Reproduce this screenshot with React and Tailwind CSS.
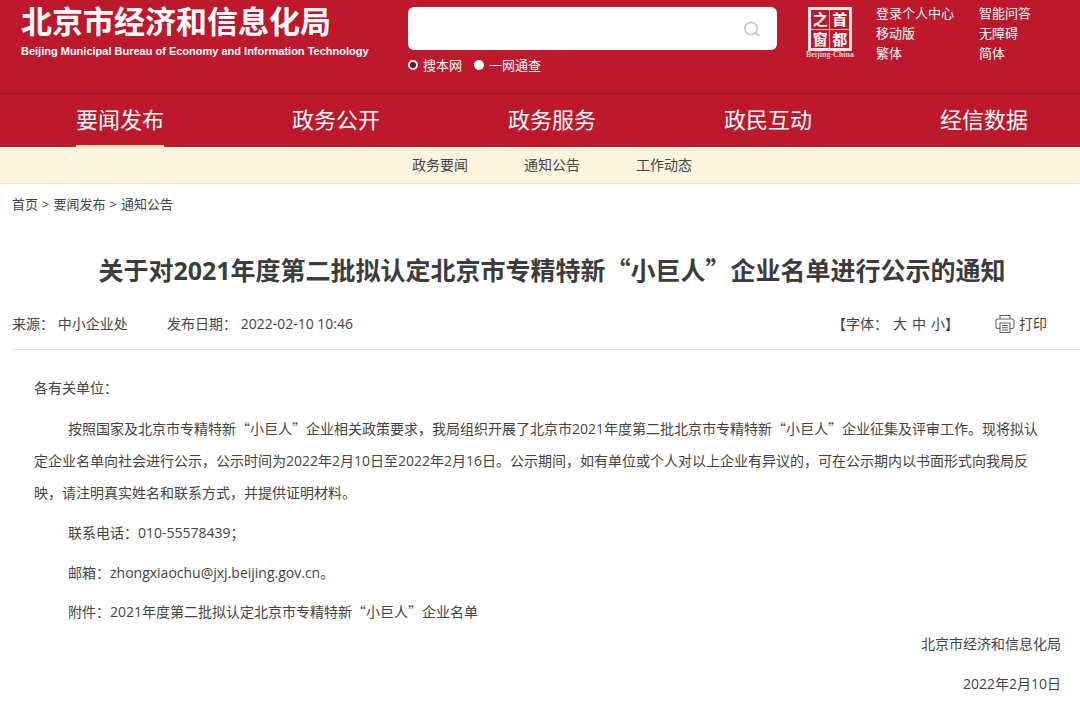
import { useState } from "react";

const navItems = ["要闻发布", "政务公开", "政务服务", "政民互动", "经信数据"];
const subItems = ["政务要闻", "通知公告", "工作动态"];
const crumbs = ["首页", "要闻发布", "通知公告"];
const userLinks = ["登录个人中心", "移动版", "繁体"];
const helpLinks = ["智能问答", "无障碍", "简体"];
const scopes = [
    { id: "site", label: "搜本网" },
    { id: "all", label: "一网通查" },
];

// full-width curly quotes have to come from the CJK font
const Quoted = ({ children }) => (
    <>
        <span className="font-['Noto_Sans_CJK_SC',sans-serif]">“</span>
        {children}
        <span className="font-['Noto_Sans_CJK_SC',sans-serif]">”</span>
    </>
);

const Seal = () => (
    <a href="#" className="flex flex-col items-center w-[50px]">
        <span className="grid grid-cols-2 gap-px w-11 h-11 border-3 border-[#fbe9ea] bg-[#f0b9bf]">
            {["之", "首", "窗", "都"].map((char) => (
                <span
                    key={char}
                    className="flex items-center justify-center overflow-hidden bg-[#bd182b] text-[15px] leading-4 font-bold"
                >
                    {char}
                </span>
            ))}
        </span>
        <span className="font-['Liberation_Serif',serif] text-[8px] leading-2 font-bold text-[#f6cdd1] whitespace-nowrap">
            Beijing-China
        </span>
    </a>
);

const SearchIcon = () => (
    <svg width="18" height="18" viewBox="0 0 18 18" fill="none" stroke="#cbcbcb">
        <circle cx="8" cy="8.5" r="6.2" strokeWidth="1.8" />
        <path d="M12.4 12.6 L15.8 15" strokeWidth="2.2" strokeLinecap="round" />
    </svg>
);

const PrintIcon = () => (
    <svg
        width="20"
        height="20"
        viewBox="0 0 20 20"
        fill="none"
        stroke="#666"
        strokeWidth="1.1"
    >
        <path d="M5 5 V1.5 H15 V5" />
        <path d="M5 14.5 H3 A2 2 0 0 1 1 12.5 V7 A2 2 0 0 1 3 5 H17 A2 2 0 0 1 19 7 V12.5 A2 2 0 0 1 17 14.5 H15" />
        <path d="M5 9 H15 V18.5 H5 Z" />
        <path d="M7 11.5 H13 M7 13.8 H13 M7 16 H13" />
    </svg>
);

const LinkColumn = ({ links }) => (
    <ul>
        {links.map((link) => (
            <li key={link}>
                <a href="#">{link}</a>
            </li>
        ))}
    </ul>
);

const Header = () => {
    const [scope, setScope] = useState("site");

    return (
        <header className="flex items-start h-[94px] pl-[21px] border-b border-[#a01222]">
            <a href="#" className="w-[387px] shrink-0">
                <span className="block mt-[3px] text-[31px] leading-9 font-bold">
                    北京市经济和信息化局
                </span>
                <span className="block font-['Liberation_Sans',sans-serif] text-[11px] leading-6 font-bold whitespace-nowrap">
                    Beijing Municipal Bureau of Economy and Information Technology
                </span>
            </a>

            <form
                className="grow mt-[7px]"
                onSubmit={(e) => e.preventDefault()}
            >
                <div className="flex items-center h-[43px] pr-4 bg-white rounded-md">
                    <input
                        type="text"
                        aria-label="搜索"
                        className="grow h-full px-3 text-gray-700 focus:outline-none"
                    />
                    <button aria-label="搜索">
                        <SearchIcon />
                    </button>
                </div>
                <div className="flex gap-3 mt-[5px] text-[13px] leading-5">
                    {scopes.map(({ id, label }) => (
                        <label key={id} className="flex items-center gap-[5px]">
                            <input
                                type="radio"
                                name="scope"
                                checked={scope === id}
                                onChange={() => setScope(id)}
                                className="appearance-none size-[10px] rounded-full bg-white checked:border-2 checked:border-white checked:bg-[#6b0f18]"
                            />
                            {label}
                        </label>
                    ))}
                </div>
            </form>

            <div className="flex shrink-0 mr-[25px] ml-7">
                <div className="mt-[7px]">
                    <Seal />
                </div>
                <div className="flex gap-[25px] mt-[3px] ml-[21px] mr-6 text-[13px] leading-5">
                    <LinkColumn links={userLinks} />
                    <LinkColumn links={helpLinks} />
                </div>
            </div>
        </header>
    );
};

const App = () => {
    return (
        <div
            lang="zh-CN"
            className="overflow-x-hidden bg-white font-['Open_Sans','Noto_Sans_CJK_SC',sans-serif] text-sm text-[#444]"
        >
            <div className="bg-[#bd182b] text-white">
                <Header />
                <nav className="grid grid-cols-5 h-[53px] pl-3 -mr-3 text-[22px]">
                    {navItems.map((item, i) => (
                        <div key={item} className="flex justify-center">
                            <a
                                href="#"
                                className={
                                    i === 0
                                        ? "leading-[51px] border-b-2 border-[#fbdca0]"
                                        : "leading-[51px]"
                                }
                            >
                                {item}
                            </a>
                        </div>
                    ))}
                </nav>
            </div>

            <div className="bg-[#fef5df] border-b border-[#f5dfbd]">
                <nav className="flex justify-center gap-14 pl-3 -mr-3 leading-9">
                    {subItems.map((item) => (
                        <a key={item} href="#">
                            {item}
                        </a>
                    ))}
                </nav>
            </div>

            <main className="ml-3 -mr-3">
                <div className="flex gap-1 pt-[10px] text-[13px] leading-5">
                    {crumbs.map((crumb, i) => (
                        <span key={crumb} className="flex gap-1">
                            {i > 0 && <span>&gt;</span>}
                            <a href="#">{crumb}</a>
                        </span>
                    ))}
                </div>

                <h1 className="mt-[35px] text-[25px] leading-10 font-bold text-center text-[#3c3c3c]">
                    关于对2021年度第二批拟认定北京市专精特新
                    <Quoted>小巨人</Quoted>企业名单进行公示的通知
                </h1>

                <div className="flex items-center h-[60px] pt-2 pr-[45px] border-b border-[#e3e3e3]">
                    <span className="w-[155px]">来源： 中小企业处</span>
                    <span>发布日期： 2022-02-10 10:46</span>
                    <div className="flex gap-[5px] ml-auto">
                        <span>【字体：</span>
                        <button>大</button>
                        <button>中</button>
                        <span>
                            <button>小</button>】
                        </span>
                    </div>
                    <button className="flex items-center gap-1 ml-9">
                        <PrintIcon />
                        打印
                    </button>
                </div>

                <article className="pt-[22px] pl-[22px] pr-[31px] leading-8">
                    <p className="mb-2">各有关单位：</p>
                    <p className="mb-2 indent-[34px]">
                        按照国家及北京市专精特新<Quoted>小巨人</Quoted>
                        企业相关政策要求，我局组织开展了北京市2021年度第二批北京市专精特新
                        <Quoted>小巨人</Quoted>企业征集及评审工作。现将拟认
                        <br />
                        定企业名单向社会进行公示，公示时间为2022年2月10日至2022年2月16日。公示期间，如有单位或个人对以上企业有异议的，可在公示期内以书面形式向我局反
                        <br />
                        映，请注明真实姓名和联系方式，并提供证明材料。
                    </p>
                    <p className="mb-2 indent-[34px]">联系电话：010-55578439；</p>
                    <p className="mb-1.5 indent-[34px]">
                        邮箱：zhongxiaochu@jxj.beijing.gov.cn。
                    </p>
                    <p className="indent-[34px]">
                        附件：
                        <a href="#">
                            2021年度第二批拟认定北京市专精特新
                            <Quoted>小巨人</Quoted>企业名单
                        </a>
                    </p>
                    <p className="mb-2 text-right">北京市经济和信息化局</p>
                    <p className="text-right">2022年2月10日</p>
                </article>
            </main>
        </div>
    );
};

export default App;
